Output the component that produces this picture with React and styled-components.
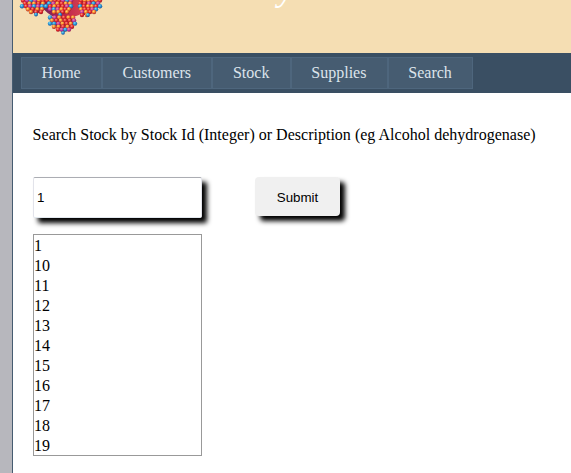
import React from 'react';
import styled, { createGlobalStyle } from 'styled-components';

const GlobalStyle = createGlobalStyle`
  * { box-sizing: border-box; }
  html, body { margin: 0; height: 100%; overflow: hidden; background: #b7b7bd; }
  body { font: 16px "Liberation Serif", serif; color: #000; }
`;
const Page = styled.main`
  height: 473px;
  margin-left: 12px;
  border-left: 1px solid #465c71;
  background: #fff;
`;
const Header = styled.header`
  height: 53px;
  padding-left: 6px;
  display: flex;
  justify-content: space-between;
  overflow: hidden;
  background: #f5deb3;
`;
const Logo = styled.svg`
  width: 86px;
  height: 38px;
  flex: none;
`;
const Title = styled.h1`
  margin: -32px 277px 0 0;
  font: italic 36px/40px "Liberation Serif", serif;
  color: #fff;
`;
const Nav = styled.nav`
  height: 40px;
  padding: 4px 8px;
  display: flex;
  background: #3a4f63;
`;
const NavLink = styled.a`
  padding: 0 20.3px 0 19.6px;
  border: 1px solid #4e667d;
  background: #465c71;
  color: #dde4ec;
  line-height: 30px;
`;
const Content = styled.section`
  padding: 33px 20px 0;
`;
const Prompt = styled.p`
  margin: 0 0 0 -0.4px;
  line-height: 18px;
  letter-spacing: 0.012px;
  white-space: nowrap;
`;
const Form = styled.form`
  margin-top: 33px;
  display: flex;
  gap: 53px;
`;
const SearchInput = styled.input`
  width: 169px;
  height: 41px;
  padding: 0 3px;
  border: 1px solid #e2e3ea;
  border-top-color: #abadb3;
  border-bottom-color: #e3e9ef;
  border-radius: 2px;
  font: 13.33px "Liberation Sans", Arial, sans-serif;
  box-shadow: 5px 5px 5px #000;
  outline: none;
`;
const SubmitButton = styled.button`
  width: 85px;
  height: 39px;
  padding: 2px 0 0;
  border: 0;
  border-radius: 4px;
  background: #f0f0f0;
  color: #000;
  font: 13.33px "Liberation Sans", Arial, sans-serif;
  box-shadow: 5px 5px 5px #000;
`;
const Results = styled.ul`
  width: 169px;
  height: 222px;
  margin: 16px 0 0;
  padding: 1px 0 1px 0;
  border: 1px solid #999;
  list-style: none;
`;
const Result = styled.li`
  height: 20px;
  line-height: 20px;
`;

const links = ['Home', 'Customers', 'Stock', 'Supplies', 'Search'];
const ids = [1, 10, 11, 12, 13, 14, 15, 16, 17, 18, 19];

const tones = {
  red: '#e02426',
  orange: '#f4742a',
  purple: '#b634ae',
  blue: '#248fd2',
};
const toneOrder = ['red', 'orange', 'red', 'purple', 'red', 'orange', 'blue', 'orange', 'red', 'purple', 'orange'];

// Each row of a cluster: [left x, right x, y]
const clusters = [
  { tip: [17, 14.5], rows: [[4, 24, 0.5], [6, 24, 3.5], [3, 23, 6.3], [9, 23, 9.3], [12, 22, 12]] },
  { tip: [41, 14.5], rows: [[28, 52, 0.5], [30, 51, 3.5], [27, 52, 6.3], [31, 50, 9.3], [35, 48, 12]] },
  { tip: [69, 15], rows: [[62, 81, 0.5], [61, 79, 3.5], [61, 81, 6.3], [62, 77, 9.3], [63, 75, 12], [63, 68, 15]] },
  { tip: [44, 32.8], rows: [[31, 54, 17.5], [33, 55, 20.5], [31, 56, 23.6], [35, 53, 26.7], [39, 50, 29.6]] },
];

function Cluster({ rows, tip, offset }) {
  return (
    <g>
      <polygon
        fill="#932039"
        points={[
          ...rows.map(([left, , y]) => `${left + 1},${y}`),
          tip.join(','),
          ...rows.slice().reverse().map(([, right, y]) => `${right - 1},${y}`),
        ].join(' ')}
      />
      {rows.flatMap(([left, right, y], row) => {
        const count = Math.max(2, Math.round((right - left) / 4.2) + 1);
        return Array.from({ length: count }, (_, i) => {
          const edge = row === 2 && (i === 0 || i === count - 1);
          const tone = edge ? 'blue' : toneOrder[(i * 3 + row * 4 + offset) % toneOrder.length];
          const x = left + ((right - left) * i) / (count - 1);
          return <circle key={`${row}-${i}`} cx={x} cy={y} r="2.2" fill={`url(#bead-${tone})`} />;
        });
      })}
      <circle cx={tip[0]} cy={tip[1]} r="1.9" fill="url(#bead-blue)" />
    </g>
  );
}

function MoleculeLogo() {
  return (
    <Logo viewBox="0 0 86 38" aria-hidden="true">
      <defs>
        {Object.entries(tones).map(([name, color]) => (
          <radialGradient key={name} id={`bead-${name}`} cx="40%" cy="34%" r="72%">
            <stop offset="0" stopColor={name === 'orange' ? '#ffe36a' : name === 'blue' ? '#78ddf5' : '#ff9683'} />
            <stop offset="0.5" stopColor={color} />
            <stop offset="1" stopColor={name === 'blue' ? '#174789' : '#8d152a'} />
          </radialGradient>
        ))}
        <linearGradient id="core" x2="1">
          <stop offset="0" stopColor="#6b275c" />
          <stop offset="0.55" stopColor="#bd244d" />
          <stop offset="1" stopColor="#d64450" />
        </linearGradient>
      </defs>
      <path d="M22 0H64V11Q62 15 57 16L52 18H37Q28 14 22 6Z" fill="url(#core)" />
      {clusters.map((cluster, i) => <Cluster key={i} {...cluster} offset={i * 2} />)}
    </Logo>
  );
}

export default function App() {
  return (
    <>
      <GlobalStyle />
      <Page>
        <Header>
          <MoleculeLogo />
          <Title>y</Title>
        </Header>
        <Nav>{links.map((l) => <NavLink key={l}>{l}</NavLink>)}</Nav>
        <Content>
          <Prompt>Search Stock by Stock Id (Integer) or Description (eg Alcohol dehydrogenase)</Prompt>
          <Form>
            <SearchInput defaultValue="1" />
            <SubmitButton type="button">Submit</SubmitButton>
          </Form>
          <Results>{ids.map((n) => <Result key={n}>{n}</Result>)}</Results>
        </Content>
      </Page>
    </>
  );
}
